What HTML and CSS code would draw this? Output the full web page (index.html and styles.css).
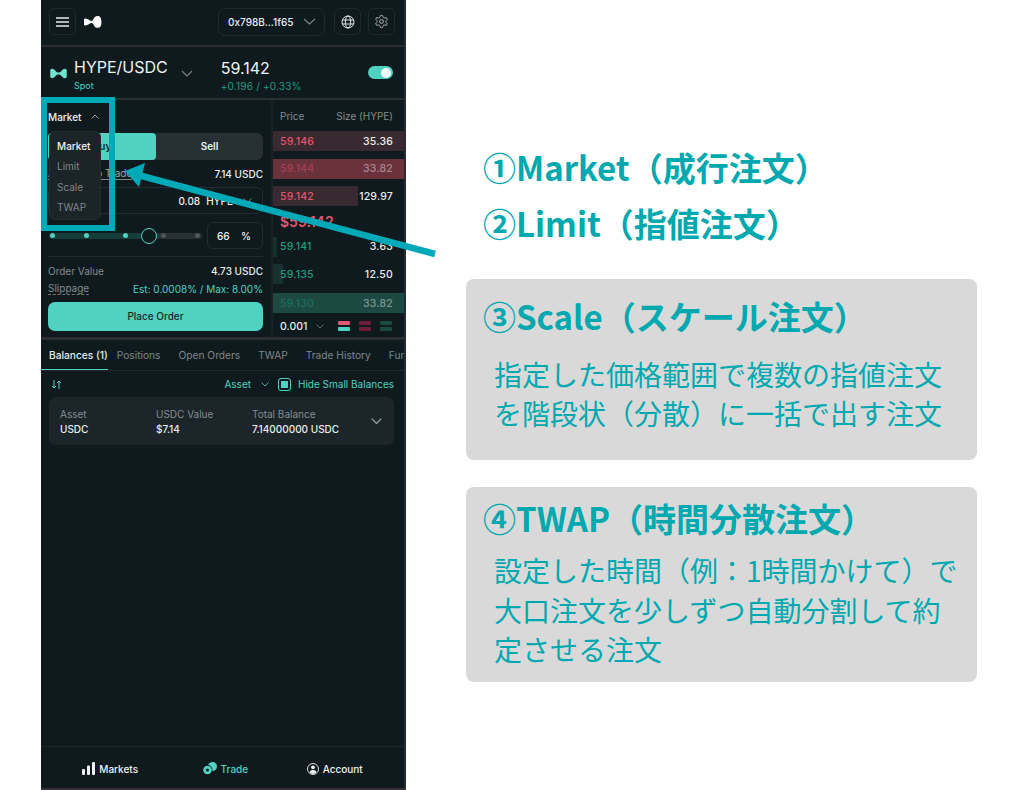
FILE: index.html
```html
<!DOCTYPE html>
<html lang="ja">
<head>
    <meta charset="utf-8">
    <title>HYPE/USDC</title>
    <link rel="stylesheet" href="styles.css">
</head>
<body>
<div class="page">
    <div class="phone">
        <div class="topbar">
            <div class="iconbtn">
                <svg width="13" height="10" viewBox="0 0 13 10"><path d="M0 1h13M0 5h13M0 9h13" stroke="#e8ecec" stroke-width="1.3"/></svg>
            </div>
            <svg class="toplogo" width="18" height="12" viewBox="0 0 18 12"><path d="M0 3C2 1.5 4 3 6 4.5 7.5 5.5 8.5 5 9.5 3 10.5.5 13-.5 15.5.5 18 2 18 9 16 11 14 12.5 11 12 10 9.5 9 7 7.5 6.5 6 7.5 4 9 1.5 10 0 9Z" fill="#fff"/></svg>
            <div class="wallet">
                <span>0x798B...1f65</span>
                <svg width="13" height="7" viewBox="0 0 13 7"><path d="M1 1l5.5 5L12 1" fill="none" stroke="#7d8689" stroke-width="1.1"/></svg>
            </div>
            <div class="iconbtn">
                <svg width="14" height="14" viewBox="0 0 14 14" fill="none" stroke="#e4e8e8" stroke-width="1"><circle cx="7" cy="7" r="6"/><ellipse cx="7" cy="7" rx="2.7" ry="6"/><path d="M1.3 5h11.4M1.3 9h11.4"/></svg>
            </div>
            <div class="iconbtn">
                <svg width="15" height="15" viewBox="0 0 24 24" fill="none" stroke="#b4baba" stroke-width="1.6"><path d="M12.22 2h-.44a2 2 0 0 0-2 2v.18a2 2 0 0 1-1 1.73l-.43.25a2 2 0 0 1-2 0l-.15-.08a2 2 0 0 0-2.73.73l-.22.38a2 2 0 0 0 .73 2.73l.15.1a2 2 0 0 1 1 1.72v.51a2 2 0 0 1-1 1.74l-.15.09a2 2 0 0 0-.73 2.73l.22.38a2 2 0 0 0 2.73.73l.15-.08a2 2 0 0 1 2 0l.43.25a2 2 0 0 1 1 1.73V20a2 2 0 0 0 2 2h.44a2 2 0 0 0 2-2v-.18a2 2 0 0 1 1-1.73l.43-.25a2 2 0 0 1 2 0l.15.08a2 2 0 0 0 2.73-.73l.22-.39a2 2 0 0 0-.73-2.73l-.15-.08a2 2 0 0 1-1-1.74v-.5a2 2 0 0 1 1-1.74l.15-.09a2 2 0 0 0 .73-2.73l-.22-.38a2 2 0 0 0-2.73-.73l-.15.08a2 2 0 0 1-2 0l-.43-.25a2 2 0 0 1-1-1.73V4a2 2 0 0 0-2-2z"/><circle cx="12" cy="12" r="3"/></svg>
            </div>
        </div>

        <div class="pairbar">
            <svg class="pairlogo" width="17" height="11" viewBox="0 0 18 12"><path d="M0 2C2 0 4 1 6 3.5 7.5 5.5 10.500 5.500 12 3.500 14 1 16 0 18 2V10C16 12 14 11 12 8.500 10.500 6.500 7.500 6.500 6 8.500 4 11 2 12 0 10Z" fill="#6fe3cf"/></svg>
            <div class="pairname">
                <div class="pairtitle">HYPE/USDC</div>
                <div class="spot">Spot</div>
            </div>
            <svg class="pairchev" width="12" height="7" viewBox="0 0 12 7"><path d="M1 1l5 5 5-5" fill="none" stroke="#7d8689" stroke-width="1.1"/></svg>
            <div class="pairprice">
                <div class="lastprice">59.142</div>
                <div class="change">+0.196 / +0.33%</div>
            </div>
            <div class="toggle"><span class="knob"></span></div>
        </div>

        <div class="trade">
            <div class="form">
                <div class="ordertype">
                    <span>Market</span>
                    <svg width="8" height="5" viewBox="0 0 8 5"><path d="M.5 4.500L4 1l3.500 3.500" fill="none" stroke="#aab0b0" stroke-width=".9"/></svg>
                </div>
                <div class="menu">
                    <div class="menuitem active">Market</div>
                    <div class="menuitem">Limit</div>
                    <div class="menuitem">Scale</div>
                    <div class="menuitem">TWAP</div>
                </div>
                <div class="side">
                    <div class="buy">Buy</div>
                    <div class="sell">Sell</div>
                </div>
                <div class="kv avail">
                    <span class="under">Available to Trade</span>
                    <span class="strong">7.14 USDC</span>
                </div>
                <div class="sizebox">
                    <span class="strong">0.08</span>
                    <span class="strong hype">HYPE</span>
                    <svg width="9" height="5" viewBox="0 0 9 5"><path d="M.5.500l4 4 4-4" fill="none" stroke="#7d8689"/></svg>
                </div>
                <div class="sliderrow">
                    <div class="slider">
                        <div class="sliderfill"></div>
                        <span class="dot on d1"></span>
                        <span class="dot on d2"></span>
                        <span class="dot on d3"></span>
                        <span class="dot d4"></span>
                        <span class="dot d5"></span>
                        <span class="thumb"></span>
                    </div>
                    <div class="pct"><span>66</span><span>%</span></div>
                </div>
                <div class="hr"></div>
                <div class="kv value">
                    <span class="muted">Order Value</span>
                    <span class="strong">4.73 USDC</span>
                </div>
                <div class="kv slip">
                    <span class="muted dotted">Slippage</span>
                    <span class="teal">Est: 0.0008% / Max: 8.00%</span>
                </div>
                <div class="place">Place Order</div>
            </div>

            <div class="book">
                <div class="bookhead"><span>Price</span><span>Size (HYPE)</span></div>
                <div class="row ask"><i class="depth w100 a1"></i><span>59.146</span><b>35.36</b></div>
                <div class="row ask dim"><i class="depth w100 a2"></i><span>59.144</span><b>33.82</b></div>
                <div class="row ask"><i class="depth w65 a1"></i><span>59.142</span><b>129.97</b></div>
                <div class="mid">$59.142</div>
                <div class="row bid"><i class="depth w3 b1"></i><span>59.141</span><b>3.63</b></div>
                <div class="row bid"><i class="depth w8 b1"></i><span>59.135</span><b>12.50</b></div>
                <div class="row bid dim last"><i class="depth w100 b2"></i><span>59.130</span><b>33.82</b></div>
                <div class="bookfoot">
                    <span class="tick">0.001</span>
                    <svg width="8" height="5" viewBox="0 0 8 5"><path d="M.5.500L4 4 7.500.500" fill="none" stroke="#5f686b"/></svg>
                    <div class="bars"><i class="red"></i><i class="mint"></i></div>
                    <div class="bars"><i class="darkred"></i><i class="darkred"></i></div>
                    <div class="bars"><i class="darkgreen"></i><i class="darkgreen"></i></div>
                </div>
            </div>
        </div>

        <div class="tabs">
            <span class="tab current">Balances (1)</span>
            <span class="tab">Positions</span>
            <span class="tab">Open Orders</span>
            <span class="tab">TWAP</span>
            <span class="tab">Trade History</span>
            <span class="tab">Funding History</span>
        </div>

        <div class="filters">
            <svg width="11" height="9" viewBox="0 0 11 9" fill="none" stroke="#50d2c1" stroke-width="1"><path d="M3 0v8M1 6l2 2 2-2M8 9V1M6 3l2-2 2 2"/></svg>
            <span class="grow"></span>
            <span class="teal">Asset</span>
            <svg class="assetchev" width="8" height="5" viewBox="0 0 8 5"><path d="M.5.500L4 4 7.500.500" fill="none" stroke="#50d2c1" stroke-width=".8"/></svg>
            <span class="check"><i></i></span>
            <span class="teal">Hide Small Balances</span>
        </div>

        <div class="card">
            <div class="col"><span class="muted">Asset</span><span class="strong">USDC</span></div>
            <div class="col"><span class="muted">USDC Value</span><span class="strong">$7.14</span></div>
            <div class="col"><span class="muted">Total Balance</span><span class="strong">7.14000000 USDC</span></div>
            <svg width="11" height="7" viewBox="0 0 11 7"><path d="M.7.700l4.800 4.800L10.300.700" fill="none" stroke="#aab0b0" stroke-width="1.100"/></svg>
        </div>

        <div class="spacer"></div>

        <div class="nav">
            <div class="navitem">
                <svg width="13" height="13" viewBox="0 0 13 13" fill="#f0f2f2"><rect y="7" width="3" height="6" rx="1"/><rect x="5" y="3.500" width="3" height="9.500" rx="1"/><rect x="10" width="3" height="13" rx="1"/></svg>
                <span>Markets</span>
            </div>
            <div class="navitem green">
                <svg width="14" height="13" viewBox="0 0 14 13"><circle cx="9.500" cy="4.500" r="4.500" fill="#50d2c1"/><circle cx="4.500" cy="8" r="5" fill="#0f1a1f"/><circle cx="4.500" cy="8" r="4.300" fill="#50d2c1"/><circle cx="4.500" cy="8" r="1.500" fill="#0f1a1f"/></svg>
                <span>Trade</span>
            </div>
            <div class="navitem">
                <svg width="12" height="12" viewBox="0 0 12 12"><circle cx="6" cy="6" r="5.500" fill="none" stroke="#f0f2f2" stroke-width=".9"/><circle cx="6" cy="4.300" r="1.900" fill="#f0f2f2"/><path d="M2.600 9.300C3 7.500 4.500 7 6 7s3 .5 3.400 2.300C8.500 10.400 7.300 10.900 6 10.900s-2.500-.5-3.400-1.600Z" fill="#f0f2f2"/></svg>
                <span>Account</span>
            </div>
        </div>
    </div>

    <div class="notes">
        <div class="plain">
            <h2 class="noteline">①Market（成行注文）</h2>
            <h2 class="noteline">②Limit（指値注文）</h2>
        </div>
        <div class="notebox scale">
            <h2 class="noteline">③Scale（スケール注文）</h2>
            <p class="notetext">指定した価格範囲で複数の指値注文<br>を階段状（分散）に一括で出す注文</p>
        </div>
        <div class="notebox twap">
            <h2 class="noteline">④TWAP（時間分散注文）</h2>
            <p class="notetext">設定した時間（例：1時間かけて）で<br>大口注文を少しずつ自動分割して約<br>定させる注文</p>
        </div>
    </div>

    <div class="highlight"></div>
    <svg class="arrow" width="320" height="100" viewBox="120 160 320 100">
        <path d="M435 254L138 175" stroke="#00a9b7" stroke-width="6.500"/>
        <path d="M125 171L145 163L139 187Z" fill="#00a9b7"/>
    </svg>
</div>
</body>
</html>
```

FILE: styles.css
```css
* {
    box-sizing: border-box;
}
html, body {
    margin: 0;
    height: 790px;
    overflow: hidden;
    background: #fff;
}
.page {
    position: relative;
    display: flex;
    width: 1013px;
    height: 790px;
    padding-left: 41px;
    font-family: Inter, "Liberation Sans", sans-serif;
}

/* phone */
.phone {
    width: 365px;
    height: 790px;
    display: flex;
    flex-direction: column;
    background: #0f1a1f;
    border-right: 2px solid #2c2a2e;
    border-bottom: 2px solid #3a2e38;
    color: #f0f2f2;
    font-size: 10px;
}
.topbar {
    height: 47px;
    display: flex;
    align-items: center;
    padding: 0 9px 2px 8px;
    border-bottom: 2px solid #2b2d2f;
}
.iconbtn {
    width: 27px;
    height: 27px;
    display: flex;
    align-items: center;
    justify-content: center;
    border: 1px solid #1f2a2f;
    border-radius: 6px;
    margin-left: 7px;
}
.topbar .iconbtn:first-child {
    margin-left: 0;
}
.toplogo {
    margin-left: 8px;
    margin-right: auto;
}
.wallet {
    width: 107px;
    height: 28px;
    display: flex;
    align-items: center;
    justify-content: space-between;
    padding: 0 8px 0 9px;
    border: 1px solid #1f2a2f;
    border-radius: 7px;
    margin-right: 2px;
    font-size: 10px;
    font-weight: 500;
    color: #e8ecec;
}
.pairbar {
    height: 53px;
    display: flex;
    align-items: center;
    padding-left: 9px;
    border-bottom: 2px solid #2b2d2f;
    position: relative;
}
.pairlogo {
    margin-top: 2px;
}
.pairname {
    margin-left: 7px;
    margin-top: 7px;
}
.pairtitle {
    font-size: 16px;
    line-height: 20px;
    color: #eef1f1;
}
.spot {
    font-size: 9px;
    line-height: 18px;
    color: #50d2c1;
}
.pairchev {
    margin-left: 13px;
    margin-top: 2px;
}
.pairprice {
    margin-left: 28px;
    margin-top: 6px;
}
.lastprice {
    font-size: 16px;
    line-height: 20px;
    color: #f2f4f4;
}
.change {
    font-size: 10px;
    line-height: 16px;
    letter-spacing: .2px;
    color: #1f9c7d;
}
.toggle {
    width: 25px;
    height: 13px;
    border-radius: 7px;
    background: #50d2c1;
    margin-left: auto;
    margin-right: 11px;
    margin-top: 0;
    display: flex;
    justify-content: flex-end;
    align-items: center;
    padding-right: 2px;
}
.knob {
    width: 10px;
    height: 10px;
    border-radius: 50%;
    background: #f4f7f7;
}

/* order form + book */
.trade {
    height: 240px;
    display: flex;
    border-bottom: 3px solid #2b2d2f;
}
.form {
    width: 232px;
    padding: 0 8px 0 7px;
    position: relative;
    border-right: 2px solid #1b2227;
}
.ordertype {
    height: 33px;
    display: flex;
    align-items: center;
    gap: 10px;
    font-size: 10px;
    font-weight: 500;
}
.menu {
    position: absolute;
    left: 8px;
    top: 31px;
    width: 52px;
    height: 89px;
    padding-top: 4px;
    background: #1b2429;
    border: 1px solid #232d32;
    border-radius: 6px;
    z-index: 2;
}
.menuitem {
    height: 20.4px;
    line-height: 20px;
    padding-left: 7px;
    color: #7f8789;
    font-size: 10px;
}
.menuitem.active {
    color: #f0f2f2;
    font-weight: 500;
}
.side {
    height: 27px;
    display: flex;
    background: #273035;
    border-radius: 6px;
    font-weight: 600;
    text-align: center;
    line-height: 27px;
}
.buy {
    width: 108px;
    background: #50d2c1;
    border-radius: 4px;
    color: #0f1a1f;
}
.sell {
    flex: 1;
}
.kv {
    display: flex;
    justify-content: space-between;
    align-items: center;
}
.avail {
    height: 27px;
}
.under {
    border-bottom: 1px solid #7f8789;
    color: #a0a6a8;
}
.strong {
    font-weight: 500;
    color: #e9eded;
}
.muted {
    color: #848c8e;
}
.teal {
    color: #50d2c1;
}
.dotted {
    border-bottom: 1px dashed #6b7375;
}
.sizebox {
    height: 27px;
    display: flex;
    align-items: center;
    justify-content: flex-end;
    padding-right: 10px;
    border: 1px solid #222c31;
    border-radius: 6px;
}
.hype {
    margin-left: 6px;
    margin-right: 10px;
}
.sliderrow {
    display: flex;
    align-items: center;
    height: 27px;
    margin-top: 8px;
}
.slider {
    position: relative;
    width: 153px;
    height: 6px;
    background: #273035;
    border-radius: 3px;
    margin-left: 1px;
}
.sliderfill {
    width: 101px;
    height: 6px;
    background: #163d3a;
    border-radius: 3px;
}
.dot {
    position: absolute;
    top: 0.500px;
    width: 5px;
    height: 5px;
    border-radius: 50%;
    background: #4d5558;
}
.dot.on {
    background: #50d2c1;
}
.d1 { left: 1px; }
.d2 { left: 35px; }
.d3 { left: 74px; }
.d4 { left: 112px; }
.d5 { left: 146px; }
.thumb {
    position: absolute;
    left: 92px;
    top: -5px;
    width: 16px;
    height: 16px;
    border: 1.500px solid #50d2c1;
    border-radius: 50%;
    background: #0f1a1f;
}
.pct {
    width: 56px;
    height: 27px;
    margin-left: auto;
    display: flex;
    justify-content: space-between;
    align-items: center;
    padding: 0 11px 0 9px;
    border: 1px solid #222c31;
    border-radius: 6px;
    font-weight: 500;
}
.hr {
    height: 1px;
    background: #232c31;
    margin-top: 7px;
}
.value {
    height: 27px;
}
.slip {
    height: 9px;
}
.place {
    height: 29px;
    margin-top: 9px;
    line-height: 29px;
    text-align: center;
    background: #50d2c1;
    border-radius: 7px;
    color: #1a2a2c;
    font-weight: 500;
}
.book {
    flex: 1;
    position: relative;
    color: #e9eded;
}
.bookhead {
    height: 31px;
    display: flex;
    justify-content: space-between;
    align-items: center;
    padding: 0 11px 0 7px;
    color: #848c8e;
}
.row {
    position: relative;
    height: 20px;
    margin-bottom: 7.500px;
    display: flex;
    justify-content: space-between;
    align-items: center;
    padding: 0 11px 0 7px;
}
.row span, .row b {
    position: relative;
    font-size: 10.500px;
    font-weight: 500;
    letter-spacing: .2px;
}
.ask span {
    color: #e0576f;
}
.bid span {
    color: #1f9c7d;
}
.dim span, .dim b {
    opacity: .45;
}
.depth {
    position: absolute;
    left: 0;
    top: 0;
    bottom: 0;
}
.w100 { width: 100%; }
.w65 { width: 65%; }
.w3 { width: 3%; }
.w8 { width: 8%; }
.a1 { background: #382a30; }
.a2 { background: #6b323b; }
.b1 { background: #15302f; }
.b2 { background: #1c4a42; }
.mid {
    height: 22px;
    margin-top: -7px;
    margin-bottom: 8px;
    padding: 8px 0 0 7px;
    font-size: 14px;
    font-weight: 600;
    line-height: 14px;
    color: #e0576f;
}
.last {
    margin-top: 9px;
    margin-bottom: 0;
}
.bookfoot {
    height: 27px;
    display: flex;
    align-items: center;
    padding-left: 7px;
}
.tick {
    font-size: 10.500px;
    font-weight: 500;
    width: 36px;
}
.bars {
    width: 12px;
    margin-left: 9px;
}
.bookfoot svg {
    margin-right: 5px;
}
.bars i {
    display: block;
    height: 4px;
    margin-bottom: 1.500px;
    border-radius: 1px;
}
.red { background: #e0576f; }
.mint { background: #50d2c1; }
.darkred { background: #6e1d36; }
.darkgreen { background: #1b4a42; }

/* balances */
.tabs {
    height: 31px;
    display: flex;
    overflow: hidden;
    white-space: nowrap;
    align-items: stretch;
    border-bottom: 1px solid #1e282d;
    font-size: 10.200px;
    color: #7f8789;
}
.tab {
    padding-top: 9px;
    margin-right: 18px;
}
.tab.current {
    width: 74px;
    margin-right: 9px;
    padding-left: 8px;
    color: #e9eded;
    font-weight: 500;
    border-bottom: 1.500px solid #50d2c1;
}
.filters {
    height: 26px;
    display: flex;
    align-items: center;
    padding: 0 10px;
}
.grow {
    flex: 1;
}
.assetchev {
    margin: 0 9px 0 10px;
}
.check {
    width: 13px;
    height: 13px;
    margin-right: 7px;
    padding: 2px;
    border: 1px solid #50d2c1;
    border-radius: 3px;
}
.check i {
    display: block;
    width: 7px;
    height: 7px;
    background: #50d2c1;
}
.card {
    margin: 0 10px 0 8px;
    height: 48px;
    display: flex;
    align-items: center;
    padding: 0 12px 0 11px;
    background: #1b252a;
    border-radius: 7px;
}
.col {
    width: 96px;
    display: flex;
    flex-direction: column;
    gap: 3px;
    white-space: nowrap;
}
.card svg {
    margin-left: auto;
}
.spacer {
    flex: 1;
}
.nav {
    height: 42px;
    display: flex;
    justify-content: space-around;
    align-items: center;
    padding: 2px 12px 0 12px;
    border-top: 1px solid #1c262b;
}
.navitem {
    display: flex;
    align-items: center;
    gap: 4px;
    font-weight: 500;
}
.navitem.green {
    color: #50d2c1;
    margin-left: 6px;
}

/* notes on the right */
.notes {
    margin-left: 60px;
    width: 511px;
    color: #00a9b0;
    font-family: "Noto Sans CJK JP", "Noto Sans", sans-serif;
}
.noteline {
    margin: 0;
    font-size: 33px;
    line-height: 56px;
    font-weight: 700;
    white-space: nowrap;
}
.plain {
    padding: 139px 0 0 17px;
    height: 279px;
}
.notebox {
    background: #d9d9d9;
    border-radius: 8px;
    padding-left: 17px;
}
.scale {
    height: 181px;
    padding-top: 9px;
}
.twap {
    height: 195px;
    margin-top: 27px;
    padding-top: 3px;
}
.notetext {
    margin: 0;
    font-size: 28px;
    line-height: 39px;
    white-space: nowrap;
}
.scale .notetext {
    margin: 11px 0 0 11px;
    line-height: 38.500px;
}
.twap .notetext {
    margin: 5px 0 0 11px;
    line-height: 39.500px;
}

/* overlays */
.highlight {
    position: absolute;
    left: 41px;
    top: 97px;
    width: 74px;
    height: 134px;
    border: 6.500px solid #00a9b7;
    z-index: 5;
}
.arrow {
    position: absolute;
    left: 120px;
    top: 160px;
    z-index: 6;
}
```
